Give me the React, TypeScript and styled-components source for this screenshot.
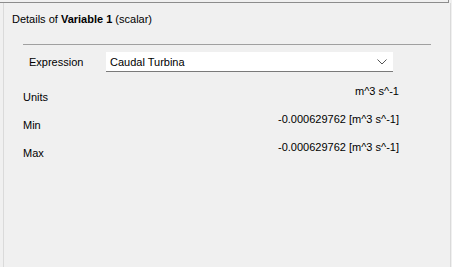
import styled, { createGlobalStyle } from "styled-components";

const GlobalStyle = createGlobalStyle`
  html, body {
    margin: 0;
    padding: 0;
    background: #f0f0f0;
  }
  body {
    font-family: "Liberation Sans", Arial, sans-serif;
    font-size: 11px;
    color: #000;
  }
`;

const Page = styled.div`
  width: 452px;
  height: 267px;
  background: #f0f0f0;
  display: flex;
  flex-direction: column;
  overflow: hidden;
`;

const TopFrame = styled.div`
  width: 448px;
  height: 2px;
  border-right: 1px solid #8c8c8c;
  border-bottom: 1px solid #8c8c8c;
  flex: none;
`;

const Panel = styled.div`
  flex: 1;
  margin-left: 3px;
  width: 446px;
  border-left: 1px solid #dadada;
  border-right: 1px solid #dadada;
  display: flex;
  flex-direction: column;
`;

const Header = styled.div`
  padding: 9px 0 0 8px;
  height: 20px;
  line-height: 14px;
  white-space: nowrap;
`;

const Group = styled.div`
  margin: 12px 0 0 19px;
  width: 408px;
  border-top: 1px solid #a0a0a0;
  padding-top: 7px;
  display: flex;
  flex-direction: column;
`;

const ExpressionRow = styled.div`
  display: flex;
  align-items: center;
  height: 20px;
`;

const ExpressionLabel = styled.span`
  width: 77px;
  padding-left: 6px;
  flex: none;
`;

const Combo = styled.div`
  width: 287px;
  height: 20px;
  box-sizing: border-box;
  background: #fff;
  border-bottom: 1px solid #7a7a7a;
  display: flex;
  align-items: center;
  padding: 0 6px 0 4px;
`;

const ComboText = styled.span`
  flex: 1;
`;

const PropRow = styled.div<{ first?: boolean }>`
  display: grid;
  grid-template-columns: 1fr auto;
  width: 376px;
  height: 28px;
  margin-top: ${(p) => (p.first ? "12px" : "0")};
`;

const PropLabel = styled.span`
  line-height: 14px;
  padding-top: 6px;
`;

const PropValue = styled.span`
  line-height: 14px;
  text-align: right;
  white-space: nowrap;
`;

const Chevron = () => (
  <svg width="10" height="6" viewBox="0 0 10 6">
    <path d="M0.5 0.5 L5 5 L9.5 0.5" fill="none" stroke="#555" strokeWidth="1" />
  </svg>
);

const rows = [
  { label: "Units", value: "m^3 s^-1" },
  { label: "Min", value: "-0.000629762 [m^3 s^-1]" },
  { label: "Max", value: "-0.000629762 [m^3 s^-1]" },
];

export default function App() {
  return (
    <>
      <GlobalStyle />
      <Page>
        <TopFrame />
        <Panel>
          <Header>
            Details of <b>Variable 1</b> (scalar)
          </Header>
          <Group>
            <ExpressionRow>
              <ExpressionLabel>Expression</ExpressionLabel>
              <Combo>
                <ComboText>Caudal Turbina</ComboText>
                <Chevron />
              </Combo>
            </ExpressionRow>
            {rows.map((r, i) => (
              <PropRow key={r.label} first={i === 0}>
                <PropLabel>{r.label}</PropLabel>
                <PropValue>{r.value}</PropValue>
              </PropRow>
            ))}
          </Group>
        </Panel>
      </Page>
    </>
  );
}
